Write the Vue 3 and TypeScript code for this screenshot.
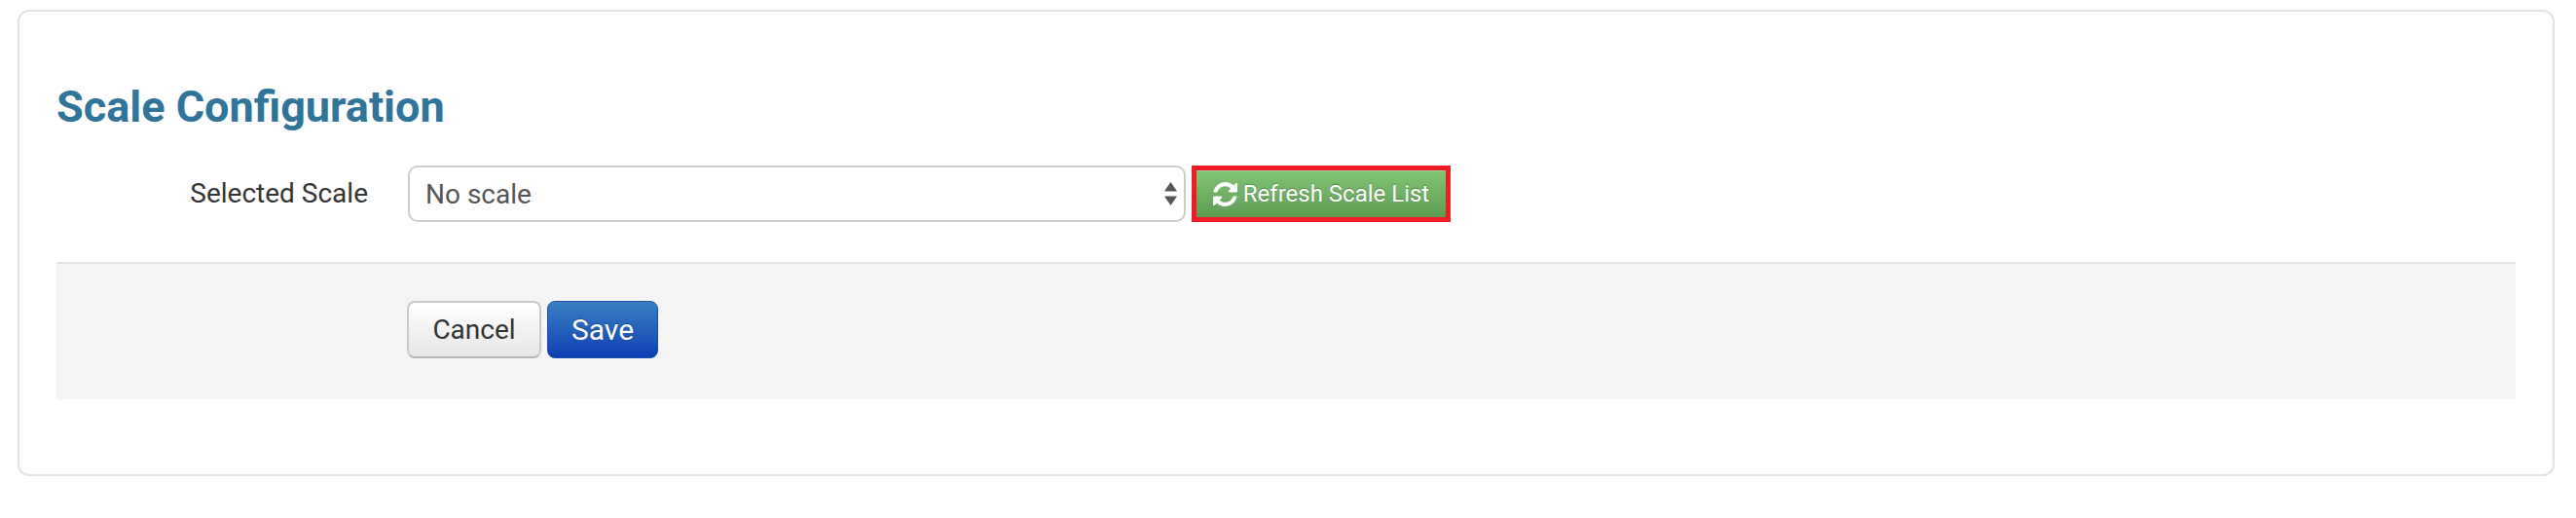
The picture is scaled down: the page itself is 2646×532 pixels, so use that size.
<script setup lang="ts">
const refreshPath =
  "M1639 1056q0 5-1 7-64 268-268 434.5t-478 166.5q-146 0-282.5-55t-243.5-157l-129 129q-19 19-45 19t-45-19-19-45v-448q0-26 19-45t45-19h448q26 0 45 19t19 45-19 45l-137 137q71 66 161 102t187 36q134 0 250-65t186-179q11-17 53-117 8-23 30-23h192q13 0 22.5 9.5t9.5 22.5zm25-800v448q0 26-19 45t-45 19h-448q-26 0-45-19t-19-45 19-45l138-138q-148-137-349-137-134 0-250 65t-186 179q-11 17-53 117-8 23-30 23h-199q-13 0-22.5-9.5t-9.5-22.5v-7q65-268 270-434.5t480-166.5q146 0 284 55.5t245 156.5l130-129q19-19 45-19t45 19 19 45z";
</script>

<template>
  <div class="page">
    <section class="card">
      <h2 class="title">Scale Configuration</h2>
      <div class="row">
        <label class="label">Selected Scale</label>
        <div class="select-wrap">
          <select class="select">
            <option>No scale</option>
          </select>
          <svg class="arrows" viewBox="0 0 13 24" width="13" height="24" aria-hidden="true">
            <path d="M6.5 0L13 9.5H0z" fill="#555" />
            <path d="M0 14.5h13L6.5 24z" fill="#555" />
          </svg>
        </div>
        <div class="highlight">
          <button type="button" class="btn-refresh">
            <svg class="icon" viewBox="128 128 1536 1536" width="25" height="25" aria-hidden="true">
              <path :d="refreshPath" fill="#fff" />
            </svg>
            <span>Refresh Scale List</span>
          </button>
        </div>
      </div>
      <div class="actions">
        <button type="button" class="btn btn-cancel">Cancel</button>
        <button type="button" class="btn btn-save">Save</button>
      </div>
    </section>
  </div>
</template>

<style>
html, body { margin: 0; background: #fff; }
</style>

<style scoped>
.page {
  width: 2646px;
  height: 532px;
  box-sizing: border-box;
  padding: 10px 22px 0 18px;
  font-family: Roboto, "Liberation Sans", sans-serif;
}
.card {
  box-sizing: border-box;
  height: 479px;
  border: 2px solid #e3e3e3;
  border-radius: 12px;
  padding: 0 38px;
  background: #fff;
}
.title {
  margin: 73px 0 0;
  font-size: 45px;
  line-height: 50px;
  font-weight: 700;
  color: #307599;
}
.row {
  display: flex;
  align-items: stretch;
  margin-top: 35px;
  height: 58px;
}
.label {
  width: 320px;
  text-align: right;
  font-size: 28px;
  line-height: 58px;
  color: #333;
}
.select-wrap {
  position: relative;
  margin-left: 41px;
  width: 799px;
}
.select {
  appearance: none;
  width: 100%;
  height: 100%;
  box-sizing: border-box;
  border: 2px solid #ccc;
  border-radius: 10px;
  background: #fff;
  padding: 0 16px;
  font-family: inherit;
  font-size: 28px;
  color: #555;
}
.arrows {
  position: absolute;
  top: 17px;
  right: 9px;
}
.highlight {
  margin-left: 6px;
  border: 5px solid #ee1c25;
  display: flex;
  width: 266px;
  box-sizing: border-box;
}
.btn-refresh {
  flex: 1;
  display: flex;
  align-items: center;
  justify-content: center;
  gap: 6px;
  border: 0;
  padding: 0;
  background: linear-gradient(#84c476, #5d9c54);
  box-shadow: inset 0 1px 0 rgba(255, 255, 255, 0.25);
  color: #fff;
  font-family: inherit;
  font-size: 24px;
  text-shadow: 0 -1px 1px rgba(0, 0, 0, 0.25);
}
.actions {
  display: flex;
  gap: 6px;
  margin-top: 41px;
  height: 141px;
  box-sizing: border-box;
  border-top: 2px solid #e5e5e5;
  background: #f4f4f4;
  padding: 38px 0 0 360px;
}
.btn {
  height: 59px;
  box-sizing: border-box;
  border-radius: 8px;
  font-family: inherit;
  font-size: 28px;
  padding: 0;
}
.btn-cancel {
  width: 138px;
  border: 2px solid #c8c8c8;
  border-bottom-color: #b5b5b5;
  background: linear-gradient(#fff, #e6e6e6);
  color: #333;
}
.btn-save {
  width: 114px;
  border: 1px solid #1c50a8;
  font-size: 30px;
  background: linear-gradient(#3a80c2, #0f3fb3);
  color: #fff;
  text-shadow: 0 -1px 1px rgba(0, 0, 0, 0.25);
}
</style>
